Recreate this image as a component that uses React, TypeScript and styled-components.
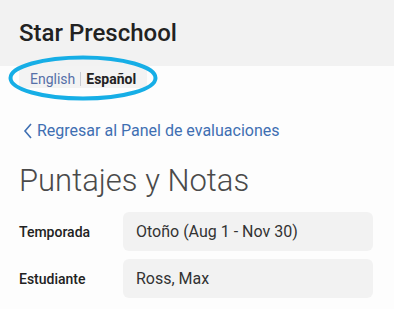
import React from "react";
import styled, { createGlobalStyle } from "styled-components";

const Global = createGlobalStyle`
  html, body { margin: 0; padding: 0; background: #fdfdfd; }
  body { font-family: Roboto, "Liberation Sans", sans-serif; }
`;

const Page = styled.div`
  width: 394px;
  min-height: 309px;
  position: relative;
  background: #fdfdfd;
`;

const Header = styled.header`
  height: 66px;
  background: #f2f2f2;
  display: flex;
  align-items: center;
  padding-left: 19px;
  box-sizing: border-box;
`;

const Brand = styled.h1`
  margin: 0;
  font-size: 24px;
  font-weight: 500;
  color: #222;
  letter-spacing: 0;
`;

const Content = styled.main`
  padding: 0 21px 0 19px;
  display: flex;
  flex-direction: column;
`;

const LangBar = styled.div`
  align-self: flex-start;
  display: flex;
  align-items: center;
  gap: 5px;
  height: 22px;
  box-sizing: border-box;
  padding: 5px 11px 1px;
  line-height: 16px;
  background: #f3f3f3;
  font-size: 14px;
`;

const LangLink = styled.span<{ $active?: boolean }>`
  color: ${(p) => (p.$active ? "#222" : "#5670a8")};
  font-weight: ${(p) => (p.$active ? 700 : 400)};
`;

const Sep = styled.span`
  width: 1px;
  height: 14px;
  background: #c8ccd4;
`;

const Circle = styled.svg`
  position: absolute;
  left: 8px;
  top: 55px;
  pointer-events: none;
`;

const BackLink = styled.a`
  margin-top: 33px;
  display: flex;
  align-items: center;
  gap: 3px;
  color: #3f6fb2;
  font-size: 16px;
  text-decoration: none;
  margin-left: 3px;
`;

const Title = styled.h2`
  margin: 24px 0 0;
  font-size: 31px;
  font-weight: 300;
  color: #4a4a4a;
  line-height: 34px;
`;

const Rows = styled.div`
  margin-top: 14px;
  display: flex;
  flex-direction: column;
  gap: 8px;
`;

const Row = styled.div`
  display: grid;
  grid-template-columns: 104px 1fr;
  align-items: center;
`;

const Label = styled.span`
  font-size: 14px;
  font-weight: 500;
  color: #222;
`;

const Field = styled.div`
  height: 39px;
  background: #f2f2f2;
  border-radius: 6px;
  display: flex;
  align-items: center;
  padding-left: 13px;
  font-size: 16px;
  color: #333;
`;

export default function App() {
  return (
    <Page>
      <Global />
      <Header>
        <Brand>Star Preschool</Brand>
      </Header>
      <Content>
        <LangBar>
          <LangLink>English</LangLink>
          <Sep />
          <LangLink $active>Español</LangLink>
        </LangBar>
        <BackLink href="#">
          <svg width="12" height="18" viewBox="0 0 12 18">
            <path d="M9 2 L3 9 L9 16" fill="none" stroke="#3f6fb2" strokeWidth="1.6" />
          </svg>
          Regresar al Panel de evaluaciones
        </BackLink>
        <Title>Puntajes y Notas</Title>
        <Rows>
          <Row>
            <Label>Temporada</Label>
            <Field>Otoño (Aug 1 - Nov 30)</Field>
          </Row>
          <Row>
            <Label>Estudiante</Label>
            <Field>Ross, Max</Field>
          </Row>
        </Rows>
      </Content>
      <Circle width="150" height="46" viewBox="0 0 150 46">
        <ellipse cx="75" cy="23" rx="72.5" ry="20.5" fill="none" stroke="#16aee6" strokeWidth="4" />
      </Circle>
    </Page>
  );
}
